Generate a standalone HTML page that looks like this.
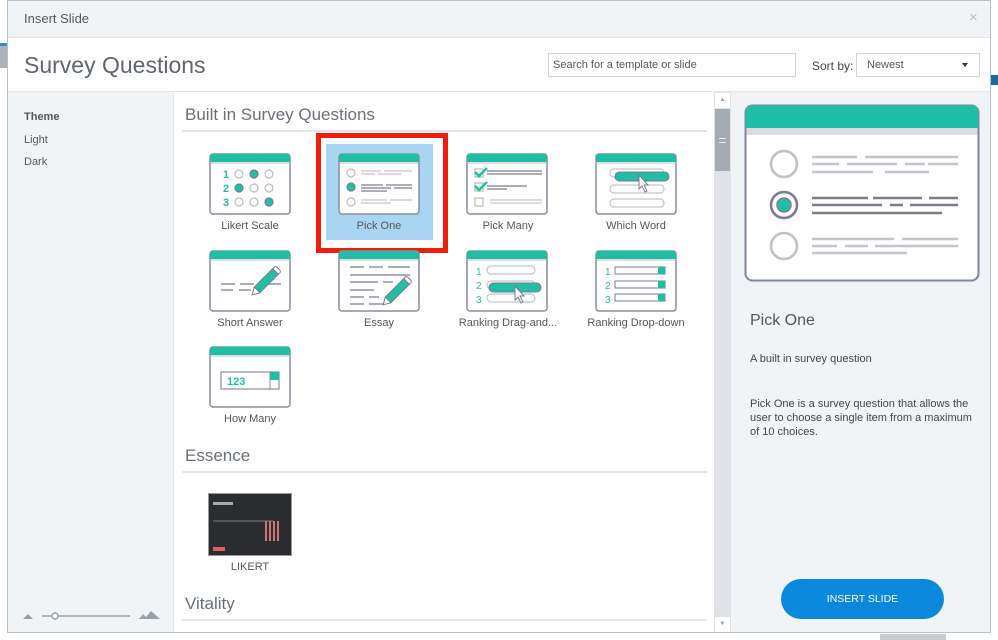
<!DOCTYPE html>
<html><head><meta charset="utf-8"><style>
*{margin:0;padding:0;box-sizing:border-box}
body{width:998px;height:640px;position:relative;overflow:hidden;background:#e9ecef;font-family:"Liberation Sans",sans-serif;color:#555}
.a{position:absolute}
.lbl{position:absolute;font-size:11px;color:#555;text-align:center;width:130px}
.sec{position:absolute;left:185px;font-size:17px;color:#6a7078}
.hr{position:absolute;left:182px;width:525px;height:2px;background:#e3e6e9}
svg text{font-family:"Liberation Sans",sans-serif}
</style></head><body>
<div class="a" style="left:0;top:0;width:8px;height:640px;background:#fff"></div>
<div class="a" style="left:0;top:43px;width:8px;height:3px;background:#2d8fd8"></div>
<div class="a" style="left:0;top:46px;width:8px;height:22px;background:#aab2ba"></div>
<div class="a" style="left:990px;top:0;width:8px;height:640px;background:#fff"></div>
<div class="a" style="left:990px;top:75px;width:8px;height:10px;background:#1a6a9a"></div>
<div class="a" style="left:0;top:632px;width:998px;height:8px;background:#fff"></div>
<div class="a" style="left:880px;top:634px;width:66px;height:6px;background:#c8ccd0"></div>
<div class="a" style="left:7px;top:0;width:984px;height:633px;border:1px solid #b9bec4;background:#fff"></div>
<div class="a" style="left:8px;top:1px;width:982px;height:37px;background:#f1f4f7;border-bottom:1px solid #e3e6e9"></div>
<div class="a" style="left:24px;top:11px;font-size:13px;color:#555">Insert Slide</div>
<div class="a" style="left:969px;top:9px;font-size:15px;color:#bbb">×</div>
<div class="a" style="left:24px;top:52px;font-size:23px;color:#5f656d">Survey Questions</div>
<div class="a" style="left:548px;top:53px;width:248px;height:24px;border:1px solid #cfd4d9;font-size:11px;padding:5px 4px;color:#555">Search for a template or slide</div>
<div class="a" style="left:812px;top:59px;font-size:12px;color:#444">Sort by:</div>
<div class="a" style="left:856px;top:53px;width:124px;height:24px;border:1px solid #cfd4d9;font-size:11px;padding:5px 10px;color:#555">Newest</div>
<div class="a" style="left:962px;top:63px;width:0;height:0;border-left:3.5px solid transparent;border-right:3.5px solid transparent;border-top:4px solid #333"></div>
<div class="a" style="left:8px;top:91px;width:982px;height:1px;background:#e3e6e9"></div>
<div class="a" style="left:8px;top:92px;width:166px;height:540px;background:#f1f4f7;border-right:1px solid #e3e6e9"></div>
<div class="a" style="left:24px;top:111px;font-size:11px;font-weight:bold;color:#555">Theme</div>
<div class="a" style="left:24px;top:134px;font-size:11px;color:#555">Light</div>
<div class="a" style="left:24px;top:156px;font-size:11px;color:#555">Dark</div>
<svg class="a" style="left:20px;top:608px" width="145" height="14"><path d="M3 11 L8 6 L13 11Z" fill="#98a1aa"/><line x1="22" y1="8" x2="110" y2="8" stroke="#98a1aa" stroke-width="1.5"/><circle cx="35" cy="8" r="3" fill="#fff" stroke="#98a1aa" stroke-width="1.5"/><path d="M119 11 L123 6 L126 9 L131 3 L140 11Z" fill="#98a1aa"/></svg>
<div class="a" style="left:714px;top:92px;width:17px;height:540px;background:#dfe3e7"></div>
<div class="a" style="left:715px;top:93px;width:15px;height:15px;background:#fff;font-size:6px;color:#999;text-align:center;line-height:15px">▲</div>
<div class="a" style="left:715px;top:109px;width:15px;height:62px;background:#a3acb2"></div>
<div class="a" style="left:719px;top:138px;width:7px;height:5px;border-top:1px solid #eee;border-bottom:1px solid #eee"></div>
<div class="a" style="left:715px;top:617px;width:15px;height:15px;background:#fff;font-size:6px;color:#999;text-align:center;line-height:15px">▼</div>
<div class="a" style="left:731px;top:92px;width:259px;height:540px;background:#f1f4f7"></div>
<svg class="a" style="left:744px;top:104px" width="236" height="178" viewBox="0 0 236 178">
<rect x="1.5" y="1.5" width="233" height="175" rx="7" fill="#fff" stroke="#85849a" stroke-width="2"/>
<path d="M1.5 24 V8.5 a7 7 0 0 1 7-7 h219 a7 7 0 0 1 7 7 V24Z" fill="#1fbfa5"/>
<rect x="2.5" y="24" width="231" height="7" fill="#dcdce2"/>
<circle cx="40" cy="60" r="13" fill="none" stroke="#c0c0c8" stroke-width="2.5"/>
<circle cx="40" cy="101" r="13" fill="none" stroke="#7b7a90" stroke-width="2.5"/><circle cx="40" cy="101" r="7" fill="#1fbfa5" stroke="#7b7a90" stroke-width="1.5"/>
<circle cx="40" cy="142" r="13" fill="none" stroke="#c0c0c8" stroke-width="2.5"/>
<g stroke="#c4c4cc" stroke-width="2.5"><path d="M68 53h45M121 53h93M68 60h27M103 60h50M161 60h20M184 60h30M68 68h61M141 68h44M68 135h82M158 135h56M68 142h25M101 142h23M131 142h83M68 149h95"/></g>
<g stroke="#7b7a90" stroke-width="2.5"><path d="M68 94h56M129 94h49M185 94h29M68 101h70M146 101h13M166 101h48M68 109h130"/></g>
</svg>
<div class="a" style="left:750px;top:312px;font-size:16px;color:#555">Pick One</div>
<div class="a" style="left:750px;top:353px;font-size:11px;color:#444">A built in survey question</div>
<div class="a" style="left:750px;top:397px;width:230px;font-size:11px;line-height:14px;color:#444">Pick One is a survey question that allows the user to choose a single item from a maximum of 10 choices.</div>
<div class="a" style="left:781px;top:579px;width:163px;height:40px;border-radius:20px;background:#0a88dc;color:#fff;font-size:10.5px;text-align:center;line-height:40px">INSERT SLIDE</div>
<div class="sec" style="top:105px">Built in Survey Questions</div>
<div class="hr" style="top:130px"></div>
<div class="a" style="left:316px;top:133px;width:132px;height:120px;border:5px solid #f01c0c;background:#fff"></div>
<div class="a" style="left:326px;top:144px;width:107px;height:96px;background:#a9d5f2"></div>
<svg width="0" height="0" style="position:absolute"><defs>
<g id="win"><rect x="1" y="1" width="80" height="60" rx="3" fill="#fff" stroke="#8c8c9c" stroke-width="1.5"/><path d="M1 9V4a3 3 0 0 1 3-3h74a3 3 0 0 1 3 3v5Z" fill="#1fbfa5"/><rect x="1.8" y="9" width="78.4" height="2" fill="#dddde3"/></g>
</defs></svg>
<svg class="a" style="left:209px;top:153px" width="82" height="62"><use href="#win"/>
<g font-size="11" fill="#1fbfa5" font-weight="bold"><text x="14" y="25">1</text><text x="14" y="39">2</text><text x="14" y="53">3</text></g>
<g fill="none" stroke="#bbb" stroke-width="1.2"><circle cx="30" cy="21" r="4"/><circle cx="60" cy="21" r="4"/><circle cx="45" cy="35" r="4"/><circle cx="60" cy="35" r="4"/><circle cx="30" cy="49" r="4"/><circle cx="45" cy="49" r="4"/></g>
<g fill="#1fbfa5" stroke="#7b7a90" stroke-width="1.2"><circle cx="45" cy="21" r="4"/><circle cx="30" cy="35" r="4"/><circle cx="60" cy="49" r="4"/></g></svg>
<div class="lbl" style="left:185px;top:220px">Likert Scale</div>
<svg class="a" style="left:338px;top:153px" width="82" height="62"><use href="#win"/>
<g fill="none" stroke="#bbb" stroke-width="1.2"><circle cx="13" cy="20" r="4"/><circle cx="13" cy="49" r="4"/></g>
<circle cx="13" cy="34" r="4" fill="#1fbfa5" stroke="#7b7a90" stroke-width="1.2"/>
<g stroke="#c4c4cc" stroke-width="1.2"><path d="M23 18h20M46 18h28M23 21h14M40 21h24M23 47h26M52 47h22M23 50h30"/></g>
<g stroke="#7b7a90" stroke-width="1.2"><path d="M23 32h22M48 32h26M23 35h30M56 35h18M23 38h26"/></g></svg>
<div class="lbl" style="left:314px;top:220px">Pick One</div>
<svg class="a" style="left:466px;top:153px" width="82" height="62"><use href="#win"/>
<g fill="none" stroke="#bbb" stroke-width="1.2"><rect x="9" y="16" width="8" height="8"/><rect x="9" y="30" width="8" height="8"/><rect x="9" y="45" width="8" height="8"/></g>
<g fill="none" stroke="#1fbfa5" stroke-width="2.5"><path d="M9 19l4 4 8-8M9 33l4 4 8-8"/></g>
<g stroke="#7b7a90" stroke-width="1.2"><path d="M21 18h55M21 21h55M21 33h40M21 36h20"/></g>
<g stroke="#c4c4cc" stroke-width="1.2"><path d="M24 47h52M24 50h52"/></g></svg>
<div class="lbl" style="left:443px;top:220px">Pick Many</div>
<svg class="a" style="left:595px;top:153px" width="82" height="62"><use href="#win"/>
<g fill="none" stroke="#c4c4cc" stroke-width="1.2"><rect x="15" y="16" width="54" height="8" rx="4"/><rect x="15" y="32" width="54" height="8" rx="4"/><rect x="15" y="46" width="54" height="8" rx="4"/></g>
<rect x="20" y="19" width="54" height="9" rx="4.5" fill="#1fbfa5" stroke="#7b7a90" stroke-width="1"/>
<path d="M44 22v14l3-3 3 6 2-1-3-6h4Z" fill="#fff" stroke="#7b7a90" stroke-width="1"/></svg>
<div class="lbl" style="left:571px;top:220px">Which Word</div>
<svg class="a" style="left:209px;top:250px" width="82" height="62"><use href="#win"/>
<g stroke="#7b7a90" stroke-width="1.2"><path d="M12 34h14M31 34h14M50 34h22M12 40h12M30 40h12"/></g>
<g transform="rotate(-45 58 30)"><rect x="44" y="26" width="26" height="8" fill="#1fbfa5" stroke="#7b7a90"/><rect x="70" y="26" width="4" height="8" rx="2" fill="#fff" stroke="#7b7a90"/><path d="M44 26l-7 4 7 4Z" fill="#fff" stroke="#7b7a90"/></g></svg>
<div class="lbl" style="left:185px;top:317px">Short Answer</div>
<svg class="a" style="left:338px;top:250px" width="82" height="62"><use href="#win"/>
<g stroke="#7b7a90" stroke-width="1.2"><path d="M12 17h14M31 17h14M50 17h22M12 25h60M12 32h28M45 32h10M12 40h24M12 47h14M31 47h10M12 54h14M31 54h14"/></g>
<g transform="rotate(-45 60 40)"><rect x="46" y="36" width="26" height="8" fill="#1fbfa5" stroke="#7b7a90"/><rect x="72" y="36" width="4" height="8" rx="2" fill="#fff" stroke="#7b7a90"/><path d="M46 36l-7 4 7 4Z" fill="#fff" stroke="#7b7a90"/></g></svg>
<div class="lbl" style="left:314px;top:317px">Essay</div>
<svg class="a" style="left:466px;top:250px" width="82" height="62"><use href="#win"/>
<g font-size="10" fill="#1fbfa5"><text x="10" y="25">1</text><text x="10" y="39">2</text><text x="10" y="53">3</text></g>
<g fill="none" stroke="#c4c4cc" stroke-width="1.2"><rect x="21" y="16" width="48" height="8" rx="4"/><rect x="21" y="31" width="48" height="8" rx="4"/><rect x="21" y="44" width="48" height="8" rx="4"/></g>
<rect x="23" y="33" width="52" height="9" rx="4.5" fill="#1fbfa5" stroke="#7b7a90" stroke-width="1"/>
<path d="M49 36v14l3-3 3 6 2-1-3-6h4Z" fill="#fff" stroke="#7b7a90" stroke-width="1"/></svg>
<div class="lbl" style="left:443px;top:317px">Ranking  Drag-and...</div>
<svg class="a" style="left:595px;top:250px" width="82" height="62"><use href="#win"/>
<g font-size="10" fill="#1fbfa5"><text x="10" y="25">1</text><text x="10" y="39">2</text><text x="10" y="53">3</text></g>
<g fill="#fff" stroke="#7b7a90" stroke-width="1"><rect x="20" y="17" width="50" height="7"/><rect x="20" y="31" width="50" height="7"/><rect x="20" y="44" width="50" height="7"/></g>
<g fill="#1fbfa5"><rect x="63" y="17" width="7" height="7"/><rect x="63" y="31" width="7" height="7"/><rect x="63" y="44" width="7" height="7"/></g></svg>
<div class="lbl" style="left:571px;top:317px">Ranking Drop-down</div>
<svg class="a" style="left:209px;top:346px" width="82" height="62"><use href="#win"/>
<rect x="12" y="26" width="58" height="17" fill="#fff" stroke="#8c8c9c" stroke-width="1.2"/>
<text x="18" y="39" font-size="11" font-weight="bold" fill="#1fbfa5">123</text>
<rect x="61" y="26" width="9" height="8" fill="#1fbfa5"/><line x1="61" y1="26" x2="61" y2="43" stroke="#8c8c9c"/></svg>
<div class="lbl" style="left:185px;top:413px">How Many</div>
<div class="sec" style="top:446px">Essence</div>
<div class="hr" style="top:471px"></div>
<div class="a" style="left:208px;top:493px;width:84px;height:63px;background:#2b2c30;border:1px solid #999"></div>
<div class="a" style="left:213px;top:502px;width:20px;height:3px;background:#aaa"></div>
<div class="a" style="left:213px;top:520px;width:60px;height:2px;background:#555"></div>
<div class="a" style="left:265px;top:521px;width:16px;height:20px;background:repeating-linear-gradient(90deg,#c77 0 2px,transparent 2px 4px)"></div>
<div class="a" style="left:213px;top:547px;width:12px;height:4px;background:#e06060"></div>
<div class="lbl" style="left:185px;top:561px">LIKERT</div>
<div class="sec" style="top:594px">Vitality</div>
<div class="hr" style="top:619px"></div>
</body></html>
